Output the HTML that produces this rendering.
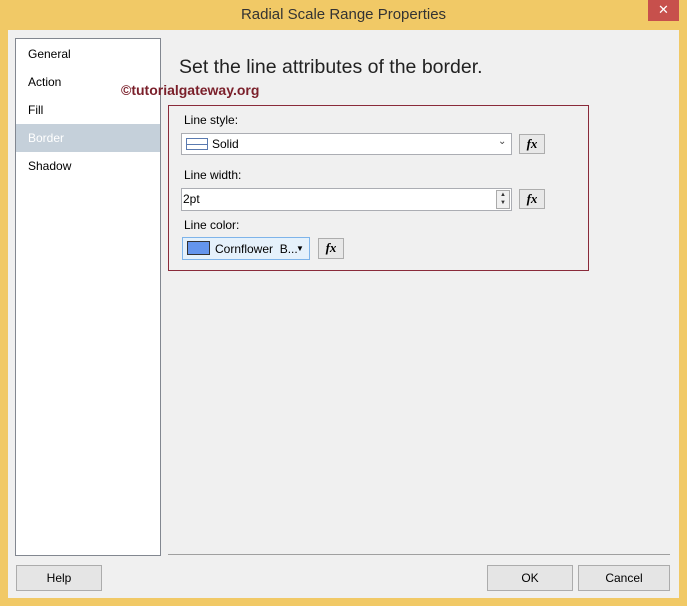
<!DOCTYPE html>
<html><head><style>
*{margin:0;padding:0;box-sizing:border-box}
body{width:687px;height:606px;background:#f1c966;font-family:"Liberation Sans",sans-serif;font-size:12px;color:#000;position:relative;overflow:hidden}
.a{position:absolute}
.title{left:0;top:0;width:687px;height:30px;text-align:center;line-height:30px;font-size:15px;color:#333}
.close{left:648px;top:0;width:31px;height:21px;background:#c7504c;color:#fff;text-align:center;line-height:20px;font-size:13px}
.client{left:8px;top:30px;width:671px;height:568px;background:#f0f0f0}
.list{left:15px;top:38px;width:146px;height:518px;background:#fff;border:1px solid #828790}
.item{position:absolute;left:0;width:144px;height:28px;line-height:28px;padding-left:12px;font-size:12px}
.btn{background:#e5e5e5;border:1px solid #acacac;text-align:center;line-height:24px;font-size:12px}
.fx{width:26px;height:20px;background:#e8e8e8;border:1px solid #adadad;text-align:center;font-family:"Liberation Serif",serif;font-style:italic;font-weight:bold;font-size:13px;line-height:18px}
.inp{background:#fff;border:1px solid #abadb3}
</style></head><body>
<div class="a title">Radial Scale Range Properties</div>
<div class="a close">✕</div>
<div class="a client"></div>
<div class="a list">
<div class="item" style="top:1px">General</div>
<div class="item" style="top:29px">Action</div>
<div class="item" style="top:57px">Fill</div>
<div class="item" style="top:85px;background:#c5d0da;color:#fff">Border</div>
<div class="item" style="top:113px">Shadow</div>
</div>
<div class="a" style="left:179px;top:56px;font-size:19.5px;color:#222">Set the line attributes of the border.</div>
<div class="a" style="left:121px;top:82px;font-size:14px;font-weight:bold;color:#7a1f2a">©tutorialgateway.org</div>
<div class="a" style="left:168px;top:105px;width:421px;height:166px;border:1px solid #8a2a3a"></div>
<div class="a" style="left:184px;top:113px">Line style:</div>
<div class="a inp" style="left:181px;top:133px;width:331px;height:22px"></div>
<div class="a" style="left:186px;top:138px;width:22px;height:12px;border:1px solid #5a7ab0;background:linear-gradient(#fff 5px,#5a7ab0 5px,#5a7ab0 6px,#fff 6px)"></div>
<div class="a" style="left:212px;top:137px">Solid</div>
<div class="a" style="left:498px;top:136px;font-size:10px;color:#444">⌄</div>
<div class="a fx" style="left:519px;top:134px">fx</div>
<div class="a" style="left:184px;top:168px">Line width:</div>
<div class="a inp" style="left:181px;top:188px;width:331px;height:23px"></div>
<div class="a" style="left:183px;top:192px">2pt</div>
<div class="a" style="left:496px;top:190px;width:14px;height:19px;border:1px solid #aaa;background:#f0f0f0;font-size:6px;line-height:8px;text-align:center;color:#333">▲<br>▼</div>
<div class="a fx" style="left:519px;top:189px">fx</div>
<div class="a" style="left:184px;top:218px">Line color:</div>
<div class="a" style="left:182px;top:237px;width:128px;height:23px;border:1px solid #7eb4ea;background:#e5f1fb"></div>
<div class="a" style="left:187px;top:241px;width:23px;height:14px;background:#6495ed;border:1px solid #333"></div>
<div class="a" style="left:215px;top:242px">Cornflower&nbsp; B...</div>
<div class="a" style="left:296px;top:244px;font-size:8px">▼</div>
<div class="a fx" style="left:318px;top:238px;height:21px">fx</div>
<div class="a" style="left:168px;top:554px;width:502px;height:1px;background:#a0a0a0"></div>
<div class="a btn" style="left:16px;top:565px;width:86px;height:26px">Help</div>
<div class="a btn" style="left:487px;top:565px;width:86px;height:26px">OK</div>
<div class="a btn" style="left:578px;top:565px;width:92px;height:26px">Cancel</div>
</body></html>
